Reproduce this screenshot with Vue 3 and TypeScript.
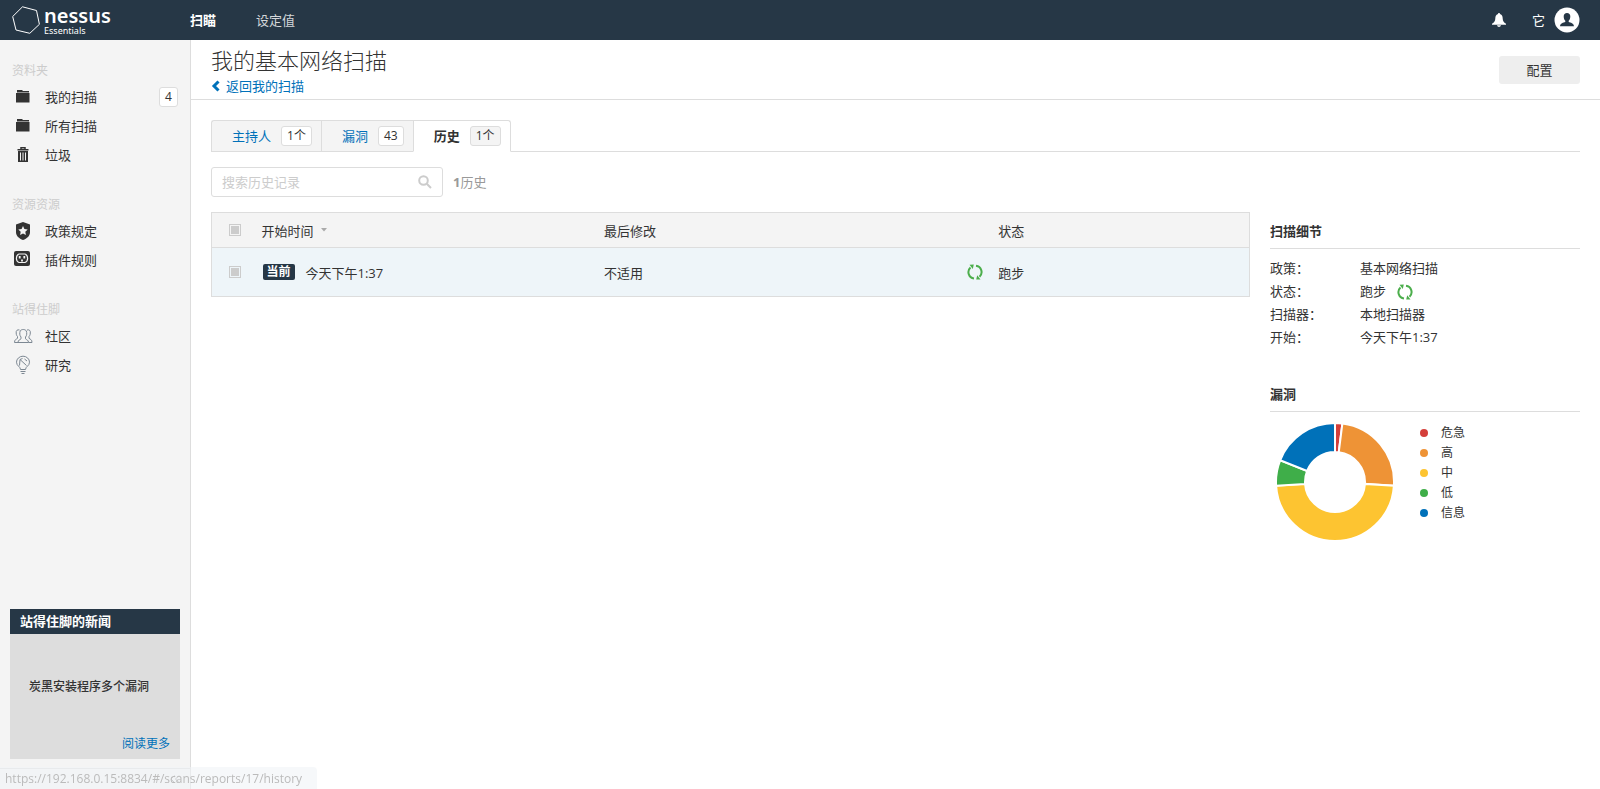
<script setup lang="ts">
import { ref } from 'vue'

interface NavItem {
  label: string
  icon: string
  count?: number
}
interface NavGroup {
  title: string
  items: NavItem[]
}
interface Slice {
  label: string
  share: number
  color: string
}

const groups: NavGroup[] = [
  {
    title: '资料夹',
    items: [
      { label: '我的扫描', icon: 'folder', count: 4 },
      { label: '所有扫描', icon: 'folder' },
      { label: '垃圾', icon: 'trash' },
    ],
  },
  {
    title: '资源资源',
    items: [
      { label: '政策规定', icon: 'shield' },
      { label: '插件规则', icon: 'plugin' },
    ],
  },
  {
    title: '站得住脚',
    items: [
      { label: '社区', icon: 'people' },
      { label: '研究', icon: 'bulb' },
    ],
  },
]

const tabs = [
  { label: '主持人', count: '1个' },
  { label: '漏洞', count: '43' },
  { label: '历史', count: '1个' },
]
const activeTab = ref('历史')
const query = ref('')

const details = [
  { term: '政策：', value: '基本网络扫描' },
  { term: '状态：', value: '跑步', running: true },
  { term: '扫描器：', value: '本地扫描器' },
  { term: '开始：', value: '今天下午1:37' },
]

const severities: Slice[] = [
  { label: '危急', share: 2, color: '#d43f3a' },
  { label: '高', share: 24, color: '#ee9336' },
  { label: '中', share: 48, color: '#fdc431' },
  { label: '低', share: 7, color: '#3fae49' },
  { label: '信息', share: 19, color: '#0071b9' },
]

const point = (radius: number, share: number): string => {
  const angle = (share / 100) * Math.PI * 2 - Math.PI / 2
  return `${60 + radius * Math.cos(angle)} ${60 + radius * Math.sin(angle)}`
}

const arcs = severities.map((slice, i) => {
  const start = severities.slice(0, i).reduce((sum, s) => sum + s.share, 0)
  const end = start + slice.share
  return {
    color: slice.color,
    d: `M${point(59, start)}A59 59 0 0 1 ${point(59, end)}L${point(30, end)}A30 30 0 0 0 ${point(30, start)}Z`,
  }
})
</script>

<template>
  <div class="app">
    <header class="topbar">
      <a class="logo" href="#">
        <svg class="logo-mark" viewBox="0 0 28 28" aria-hidden="true">
          <path d="M10.5 .8 24.5 4.5 27.4 18.3 17.8 27.3 4 24 .7 10.5Z" />
        </svg>
        <span class="logo-text">
          <span class="logo-name">nessus</span>
          <span class="logo-edition">Essentials</span>
        </span>
      </a>
      <nav class="topnav">
        <a class="topnav-link current" href="#">扫瞄</a>
        <a class="topnav-link" href="#">设定值</a>
      </nav>
      <div class="account">
        <button class="icon-button" type="button" aria-label="通知">
          <svg class="bell" viewBox="0 0 14 14" aria-hidden="true">
            <path d="M7 0C6.300 0 6 .5 6 1 3.800 1.500 3.400 3.500 3.300 5.500 3.200 8 2.300 9.300 0 10.700V11.700H14V10.700C11.700 9.300 10.800 8 10.700 5.500 10.600 3.500 10.200 1.500 8 1 8 .5 7.700 0 7 0ZM5 12.300H9C8.700 13.400 8 14 7 14S5.300 13.400 5 12.300Z" />
          </svg>
        </button>
        <a class="user" href="#">
          <span>它</span>
          <svg class="avatar" viewBox="0 0 26 26" aria-hidden="true">
            <circle cx="13" cy="13" r="12.500" fill="#fff" />
            <path d="M13 6C10.900 6 9.700 7.300 9.700 9.300 9.700 11.500 10.300 12.800 11.300 13.700V15C9.300 15.800 6.300 16 6 19.200H20C19.700 16 16.700 15.800 14.700 15V13.700C15.700 12.800 16.300 11.500 16.300 9.300 16.300 7.300 15.100 6 13 6Z" fill="#263746" />
          </svg>
        </a>
      </div>
    </header>

    <div class="body">
      <aside class="sidebar">
        <nav class="side-nav">
          <section v-for="group in groups" :key="group.title" class="group">
            <h2 class="group-title">{{ group.title }}</h2>
            <a v-for="item in group.items" :key="item.label" class="side-link" href="#">
              <svg v-if="item.icon === 'folder'" class="side-icon" viewBox="0 0 20 20" aria-hidden="true">
                <path d="M4 3H9L10 4H16V5.500H4ZM3 6H16.500V15.500H3Z" fill="#333" />
              </svg>
              <svg v-else-if="item.icon === 'trash'" class="side-icon" viewBox="0 0 20 20" aria-hidden="true">
                <path d="M8 4V2.800H12V4M4.500 4.700H15.500" fill="none" stroke="#333" stroke-width="1.500" />
                <path d="M5 6H15V17H5Z" fill="#333" />
                <path d="M7.500 7.500V15.500M10 7.500V15.500M12.500 7.500V15.500" stroke="#f4f4f4" />
              </svg>
              <svg v-else-if="item.icon === 'shield'" class="side-icon" viewBox="0 0 20 20" aria-hidden="true">
                <path d="M10 1 17 3.500V11C17 15 14 17.500 10 19 6 17.500 3 15 3 11V3.500Z" fill="#333" />
                <path d="M10 5 11.400 8.100 14.700 8.500 12.300 10.800 12.900 14.100 10 12.500 7.100 14.100 7.700 10.800 5.300 8.500 8.600 8.100Z" fill="#f4f4f4" />
              </svg>
              <svg v-else-if="item.icon === 'plugin'" class="side-icon" viewBox="0 0 20 20" aria-hidden="true">
                <rect x="1" y="1" width="16" height="15" rx="2" fill="#333" />
                <path d="M6 4C2.500 5.500 2.500 11 6 12.500H12C15.500 11 15.500 5.500 12 4Z" fill="none" stroke="#f4f4f4" stroke-width="1.200" />
                <path d="M6.700 6V8.500M11.300 6V8.500M9 9.500V11.500" stroke="#f4f4f4" stroke-width="1.800" />
              </svg>
              <svg v-else-if="item.icon === 'people'" class="side-icon" viewBox="0 0 20 20" aria-hidden="true">
                <g fill="none" stroke="#7d8893">
                  <path d="M5 16.500H15.500C15.500 13.800 13.500 14 12.500 12.800V11C14 9.500 14 7 13.300 5 12.500 3 8 3 7.200 5 6.500 7 6.500 9.500 8 11V12.800C7 14 5 13.800 5 16.500Z" />
                  <path d="M6.500 4C4.500 3.300 2.800 4.500 3.200 7 3.200 9 4 10 4.500 10.500V12.300C3 13.500 1.500 13.500 1.500 16.500H5M14 4C16 3.300 17.700 4.500 17.300 7 17.300 9 16.500 10 16 10.500V12.300C17.500 13.500 19 13.500 19 16.500H15.500" />
                </g>
              </svg>
              <svg v-else class="side-icon" viewBox="0 0 20 20" aria-hidden="true">
                <g fill="none" stroke="#7d8893">
                  <path d="M7.500 14.500C7.500 11.500 3.500 11 3.500 7.200A6.500 6 0 0 1 16.500 7.200C16.500 11 12.500 11.500 12.500 14.500ZM7.500 16.500H12.500M8.500 18.500H11.500" />
                  <path d="M6.500 10.500 7 4.500 9.500 3.500M7 4.500 13.500 10.500M11.500 4 14 6" />
                </g>
              </svg>
              <span class="side-label">{{ item.label }}</span>
              <span v-if="item.count" class="badge">{{ item.count }}</span>
            </a>
          </section>
        </nav>
        <section class="news">
          <h2 class="news-title">站得住脚的新闻</h2>
          <div class="news-body">
            <p class="news-text">炭黑安装程序多个漏洞</p>
            <a class="news-more" href="#">阅读更多</a>
          </div>
        </section>
        <div class="side-foot">
          <button class="collapse" type="button" aria-label="收起">
            <svg class="collapse-icon" viewBox="0 0 10 8" aria-hidden="true">
              <path d="M4.500 .5 1 4 4.500 7.500M9 .5 5.500 4 9 7.500" />
            </svg>
          </button>
        </div>
      </aside>

      <main class="main">
        <div class="page-head">
          <div>
            <h1 class="page-title">我的基本网络扫描</h1>
            <a class="back" href="#">
              <svg class="chevron" viewBox="0 0 10 12" aria-hidden="true">
                <path d="M7.500 1.500 3 6 7.500 10.500" />
              </svg>
              返回我的扫描
            </a>
          </div>
          <button class="configure" type="button">配置</button>
        </div>

        <div class="content">
          <div class="tabs" role="tablist">
            <button
              v-for="tab in tabs"
              :key="tab.label"
              class="tab"
              :class="{ active: tab.label === activeTab }"
              type="button"
              role="tab"
              :aria-selected="tab.label === activeTab"
              @click="activeTab = tab.label"
            >
              {{ tab.label }}
              <span class="badge">{{ tab.count }}</span>
            </button>
          </div>

          <div class="filter">
            <label class="search">
              <input v-model="query" class="search-input" type="text" placeholder="搜索历史记录" aria-label="搜索历史记录" />
              <svg class="search-icon" viewBox="0 0 14 14" aria-hidden="true">
                <circle cx="5.500" cy="5.500" r="4.300" />
                <path d="M8.700 8.700 13 13" />
              </svg>
            </label>
            <span class="total"><b>1</b>历史</span>
          </div>

          <div class="columns">
            <table class="history">
              <colgroup>
                <col class="col-check" />
                <col class="col-start" />
                <col class="col-modified" />
                <col class="col-icon" />
                <col />
              </colgroup>
              <thead>
                <tr>
                  <th class="cell-check"><input class="check" type="checkbox" aria-label="全选" /></th>
                  <th>
                    开始时间
                    <svg class="caret" viewBox="0 0 6 4" aria-hidden="true"><path d="M0 0H6L3 3.500Z" /></svg>
                  </th>
                  <th>最后修改</th>
                  <th></th>
                  <th>状态</th>
                </tr>
              </thead>
              <tbody>
                <tr>
                  <td class="cell-check"><input class="check" type="checkbox" aria-label="选择" /></td>
                  <td><span class="tag">当前</span>今天下午1:37</td>
                  <td>不适用</td>
                  <td class="cell-check">
                    <svg class="running" viewBox="0 0 16 16" aria-hidden="true">
                      <path d="M7 14.400A6.300 6.300 0 0 1 3.500 3.500M9 1.800A6.300 6.300 0 0 1 12.500 12.700" />
                      <path class="head" d="M2.500 .8 6.800 .6 5.800 5ZM13.500 15.400 9.200 15.600 10.200 11.200Z" />
                    </svg>
                  </td>
                  <td>跑步</td>
                </tr>
              </tbody>
            </table>

            <aside class="panel">
              <h2 class="panel-title">扫描细节</h2>
              <dl class="details">
                <template v-for="row in details" :key="row.term">
                  <dt>{{ row.term }}</dt>
                  <dd>
                    {{ row.value }}
                    <svg v-if="row.running" class="running" viewBox="0 0 16 16" aria-hidden="true">
                      <path d="M7 14.400A6.300 6.300 0 0 1 3.500 3.500M9 1.800A6.300 6.300 0 0 1 12.500 12.700" />
                      <path class="head" d="M2.500 .8 6.800 .6 5.800 5ZM13.500 15.400 9.200 15.600 10.200 11.200Z" />
                    </svg>
                  </dd>
                </template>
              </dl>

              <h2 class="panel-title">漏洞</h2>
              <div class="chart">
                <svg class="donut" viewBox="0 0 120 120" role="img" aria-label="漏洞">
                  <path v-for="arc in arcs" :key="arc.color" :d="arc.d" :fill="arc.color" />
                </svg>
                <ul class="legend">
                  <li v-for="slice in severities" :key="slice.label">
                    <svg class="dot" viewBox="0 0 8 8" aria-hidden="true">
                      <circle cx="4" cy="4" r="4" :fill="slice.color" />
                    </svg>
                    {{ slice.label }}
                  </li>
                </ul>
              </div>
            </aside>
          </div>
        </div>
      </main>
    </div>

    <div class="status">https://192.168.0.15:8834/#/scans/reports/17/history</div>
  </div>
</template>

<style>
body {
  margin: 0;
}
</style>

<style scoped>
* {
  box-sizing: border-box;
}

.app {
  display: flex;
  flex-direction: column;
  min-height: 100vh;
  background: #fff;
  color: #333;
  font: 13px/20px "Open Sans", "Noto Sans CJK SC", sans-serif;
}

h1,
h2,
p,
ul,
dl,
dd {
  margin: 0;
  padding: 0;
}

a {
  color: #0071b9;
  text-decoration: none;
}

button,
input {
  margin: 0;
  font: inherit;
}

button {
  padding: 0;
  border: 0;
  background: none;
  color: inherit;
  cursor: pointer;
}

svg {
  flex: none;
}

.topbar {
  display: flex;
  align-items: center;
  height: 40px;
  padding: 0 12px;
  background: #263746;
}

.logo {
  display: flex;
  align-items: center;
  gap: 4px;
  width: 178px;
  color: #fff;
}

.logo-mark {
  width: 28px;
  height: 28px;
  fill: none;
  stroke: #fff;
}

.logo-text {
  display: flex;
  flex-direction: column;
  padding-top: 4px;
}

.logo-name {
  font: 600 20px/18px "Noto Sans", sans-serif;
}

.logo-edition {
  font: 9px/12px "Noto Sans", sans-serif;
}

.topnav {
  display: flex;
  gap: 40px;
}

.topnav-link {
  color: #d4d7da;
}

.topnav-link.current {
  color: #fff;
  font-weight: 700;
}

.account {
  display: flex;
  align-items: center;
  gap: 26px;
  margin-left: auto;
  padding-right: 8px;
}

.icon-button {
  display: flex;
}

.bell {
  width: 14px;
  height: 14px;
  fill: #fff;
}

.user {
  display: flex;
  align-items: center;
  gap: 9px;
  color: #fff;
}

.avatar {
  width: 26px;
  height: 26px;
}

.body {
  display: flex;
  flex: 1;
}

.sidebar {
  display: flex;
  flex: none;
  flex-direction: column;
  width: 191px;
  border-right: 1px solid #ddd;
  background: #f4f4f4;
}

.side-nav {
  flex: 1;
  padding-top: 20px;
}

.group {
  margin-bottom: 25px;
}

.group-title {
  padding: 0 12px;
  color: #ccc;
  font-size: 12px;
  font-weight: 400;
  line-height: 22px;
}

.side-link {
  display: flex;
  align-items: center;
  height: 29px;
  padding: 0 12px 0 13px;
  color: #333;
}

.side-icon {
  width: 20px;
  height: 20px;
  margin-right: 12px;
}

.badge {
  display: inline-block;
  min-width: 19px;
  padding: 0 5px;
  border: 1px solid #ddd;
  border-radius: 3px;
  background: #fff;
  color: #333;
  font-size: 12px;
  font-weight: 400;
  line-height: 18px;
  text-align: center;
}

.side-link .badge {
  margin-left: auto;
}

.news {
  margin: 0 10px 9px;
  background: #ddd;
  font-size: 12px;
}

.news-title {
  padding: 0 10px;
  background: #263746;
  color: #fff;
  font-size: 13px;
  line-height: 25px;
}

.news-body {
  display: flex;
  flex-direction: column;
  height: 125px;
  padding: 0 10px 5px 19px;
}

.news-text {
  margin: auto 0;
  padding-top: 5px;
  font-weight: 500;
}

.news-more {
  align-self: flex-end;
}

.side-foot {
  display: flex;
  align-items: center;
  justify-content: flex-end;
  height: 21px;
  padding-right: 10px;
  border-top: 1px solid #ddd;
}

.collapse {
  display: flex;
}

.collapse-icon {
  width: 10px;
  height: 8px;
  fill: none;
  stroke: #999;
  stroke-width: 1;
}

.main {
  flex: 1;
  min-width: 0;
}

.page-head {
  display: flex;
  align-items: center;
  justify-content: space-between;
  height: 60px;
  padding: 0 20px;
  border-bottom: 1px solid #ddd;
}

.page-title {
  font-size: 22px;
  font-weight: 300;
  line-height: 32px;
}

.back {
  display: flex;
  align-items: center;
  gap: 5px;
}

.chevron {
  width: 10px;
  height: 12px;
  fill: none;
  stroke: #0071b9;
  stroke-width: 3;
}

.configure {
  width: 81px;
  height: 28px;
  border-radius: 3px;
  background: #eee;
}

.content {
  padding: 20px;
}

.tabs {
  display: flex;
  border-bottom: 1px solid #ddd;
}

.tab {
  display: flex;
  align-items: center;
  gap: 10px;
  height: 32px;
  margin-bottom: -1px;
  padding: 0 9px 0 20px;
  border: 1px solid #ddd;
  border-right: 0;
  background: #f4f4f4;
  color: #0071b9;
}

.tab:first-child {
  border-radius: 3px 0 0 0;
}

.tab.active {
  border-right: 1px solid #ddd;
  border-bottom-color: #fff;
  border-radius: 0 3px 0 0;
  background: #fff;
  color: #333;
  font-weight: 700;
}

.tab.active .badge {
  background: #f4f4f4;
}

.filter {
  display: flex;
  align-items: center;
  gap: 10px;
  margin: 15px 0;
}

.search {
  display: flex;
  align-items: center;
  width: 232px;
  height: 30px;
  padding: 0 10px;
  border: 1px solid #ddd;
  border-radius: 3px;
}

.search-input {
  flex: 1;
  min-width: 0;
  padding: 0;
  border: 0;
  outline: 0;
  background: none;
  color: #333;
}

.search-input::placeholder {
  color: #ccc;
  opacity: 1;
}

.search-icon {
  width: 14px;
  height: 14px;
  fill: none;
  stroke: #ccc;
  stroke-width: 2;
}

.total {
  color: #999;
}

.columns {
  display: flex;
  align-items: flex-start;
  gap: 20px;
}

.history {
  flex: 1;
  min-width: 0;
  border: 1px solid #ddd;
  border-collapse: collapse;
  table-layout: fixed;
}

.col-check {
  width: 50px;
}

.col-start {
  width: 33%;
}

.col-modified {
  width: 35%;
}

.col-icon {
  width: 31px;
}

.history th,
.history td {
  padding: 2px 0 0;
  font-weight: 400;
  text-align: left;
}

.history th {
  height: 35px;
  border-bottom: 1px solid #ddd;
  background: #f4f4f4;
}

.history td {
  height: 49px;
  background: #eef5f9;
}

.history .cell-check {
  padding: 0;
}

.check {
  display: block;
  width: 12px;
  height: 12px;
  margin-left: 17px;
  border: 1px solid #ccc;
  background: #ccc content-box;
  padding: 1px;
  appearance: none;
}

.cell-check .running {
  display: block;
}

.caret {
  width: 6px;
  height: 4px;
  margin-left: 4px;
  vertical-align: 4px;
  fill: #aaa;
}

.tag {
  display: inline-block;
  margin: 0 11px 0 1px;
  padding: 0 4px;
  border-radius: 2px;
  background: #263746;
  color: #fff;
  font-size: 12px;
  font-weight: 700;
  line-height: 16px;
  vertical-align: 2px;
}

.running {
  width: 16px;
  height: 16px;
  fill: none;
  stroke: #4cae4c;
  stroke-width: 2;
}

.running .head {
  fill: #4cae4c;
  stroke: none;
}

.panel {
  flex: none;
  width: 310px;
}

.panel-title {
  height: 37px;
  padding-top: 9px;
  border-bottom: 1px solid #ddd;
  font-size: 13px;
  font-weight: 700;
}

.details {
  display: grid;
  grid-template-columns: 90px 1fr;
  margin: 8px 0 26px;
  line-height: 23px;
}

.details dd {
  display: flex;
  align-items: center;
  gap: 11px;
}

.chart {
  display: flex;
  align-items: flex-start;
  gap: 25px;
  padding: 10px 5px;
}

.donut {
  width: 120px;
  height: 120px;
  stroke: #fff;
  stroke-width: 2;
}

.legend {
  padding-top: 1px;
  list-style: none;
  font-size: 12px;
}

.legend li {
  display: flex;
  align-items: center;
  gap: 13px;
}

.dot {
  width: 8px;
  height: 8px;
}

.status {
  position: fixed;
  bottom: 0;
  left: 0;
  height: 22px;
  padding: 0 15px 0 5px;
  border-top-right-radius: 4px;
  background: rgba(240, 243, 246, 0.6);
  color: #bbb;
  font-size: 12px;
  line-height: 24px;
}
</style>
